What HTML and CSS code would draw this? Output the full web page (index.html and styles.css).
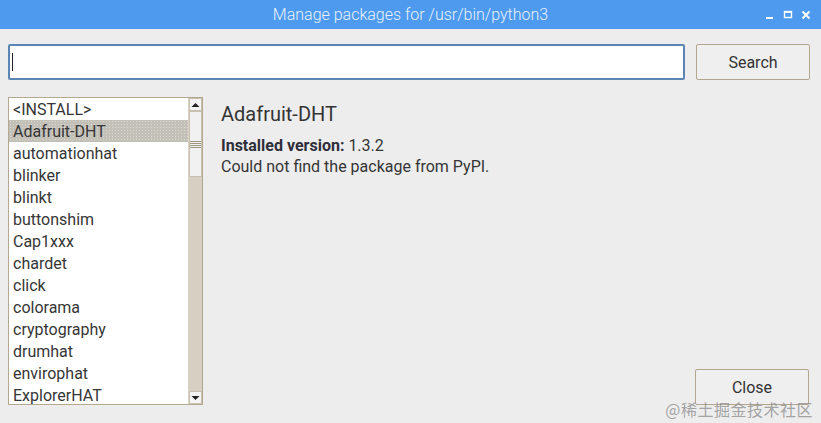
FILE: index.html
```html
<!DOCTYPE html>
<html>
<head>
<meta charset="utf-8">
<link rel="stylesheet" href="styles.css">
</head>
<body>
<div class="window">
  <div class="titlebar">
    <div class="title">Manage packages for /usr/bin/python3</div>
    <div class="wbtns">
      <svg width="10" height="10" viewBox="0 0 10 10"><rect x="1" y="7" width="7" height="2" fill="#fff"/></svg>
      <svg width="10" height="10" viewBox="0 0 10 10"><rect x="1.5" y="1.5" width="7" height="6" fill="none" stroke="#fff" stroke-width="1.4"/><rect x="1" y="1" width="8" height="2" fill="#fff"/></svg>
      <svg width="10" height="10" viewBox="0 0 10 10"><path d="M1.5 1.5 L8.5 8.5 M8.5 1.5 L1.5 8.5" stroke="#fff" stroke-width="2"/></svg>
    </div>
  </div>
  <div class="content">
    <div class="searchrow">
      <div class="searchbox"><span class="caret"></span></div>
      <div class="btn">Search</div>
    </div>
    <div class="mainrow">
      <div class="listbox">
        <div class="items">
          <div class="item">&lt;INSTALL&gt;</div>
          <div class="item sel">Adafruit-DHT</div>
          <div class="item">automationhat</div>
          <div class="item">blinker</div>
          <div class="item">blinkt</div>
          <div class="item">buttonshim</div>
          <div class="item">Cap1xxx</div>
          <div class="item">chardet</div>
          <div class="item">click</div>
          <div class="item">colorama</div>
          <div class="item">cryptography</div>
          <div class="item">drumhat</div>
          <div class="item">envirophat</div>
          <div class="item">ExplorerHAT</div>
        </div>
        <div class="scrollbar">
          <div class="arrow"><svg width="9" height="6" viewBox="0 0 9 6"><path d="M0.5 5 L4.5 1 L8.5 5 Z" fill="#222"/></svg></div>
          <div class="thumb"><div class="grip"></div></div>
          <div class="trough"></div>
          <div class="arrow"><svg width="9" height="6" viewBox="0 0 9 6"><path d="M0.5 1 L4.5 5 L8.5 1 Z" fill="#222"/></svg></div>
        </div>
      </div>
      <div class="details">
        <div class="pkgname">Adafruit-DHT</div>
        <div class="info"><b>Installed version:</b> 1.3.2</div>
        <div class="info">Could not find the package from PyPI.</div>
      </div>
      <div class="closecol">
        <div class="btn">Close</div>
      </div>
    </div>
  </div>
  <div class="watermark">@稀土掘金技术社区</div>
</div>
</body>
</html>
```

FILE: styles.css
```css
html, body {
  margin: 0;
  padding: 0;
  background: #ededed;
}
body {
  font-family: Roboto, "Noto Sans", sans-serif;
  color: #353535;
  width: 821px;
  height: 423px;
  overflow: hidden;
}
.window {
  position: relative;
  width: 821px;
  height: 423px;
}
.titlebar {
  height: 29px;
  background: #4d9aef;
  display: flex;
  align-items: center;
  justify-content: center;
  position: relative;
}
.title {
  color: #e8f1fc;
  font-size: 16px;
  font-weight: 300;
  margin-left: 0;
}
.wbtns {
  position: absolute;
  right: 10px;
  top: 10px;
  display: flex;
  gap: 8px;
}
.content {
  padding: 15px 11px 0 8px;
}
.searchrow {
  display: flex;
  gap: 11px;
  height: 36px;
}
.searchbox {
  flex: 1;
  background: #fff;
  border: 2px solid #5b86b4;
  border-radius: 2px;
  box-sizing: border-box;
  display: flex;
  align-items: center;
  padding-left: 2px;
}
.caret {
  width: 1px;
  height: 18px;
  background: #222;
}
.btn {
  width: 114px;
  height: 36px;
  box-sizing: border-box;
  border: 1px solid #b3a78f;
  border-radius: 2px;
  background: #efefef;
  display: flex;
  align-items: center;
  justify-content: center;
  font-size: 16px;
  color: #333;
  padding-top: 1px;
}
.mainrow {
  display: flex;
  margin-top: 17px;
  height: 308px;
}
.listbox {
  width: 195px;
  height: 308px;
  box-sizing: border-box;
  border: 1px solid #b3a78f;
  background: #fff;
  display: flex;
  overflow: hidden;
}
.items {
  flex: 1;
  overflow: hidden;
}
.item {
  height: 22px;
  line-height: 24px;
  font-size: 16px;
  padding-left: 4px;
  white-space: nowrap;
  color: #363636;
}
.item.sel {
  background-color: #c3c0b8;
  background-image: radial-gradient(circle, #d9d7d2 0.7px, transparent 0.9px);
  background-size: 3px 3px;
}
.scrollbar {
  width: 13px;
  display: flex;
  flex-direction: column;
  border-left: 1px solid #d8d2c4;
}
.arrow {
  height: 13px;
  background: #f4f4f4;
  border: 1px solid #c8c0b0;
  box-sizing: border-box;
  display: flex;
  align-items: center;
  justify-content: center;
}
.thumb {
  height: 66px;
  background: #f2f1f1;
  border: 1px solid #c8c0b0;
  box-sizing: border-box;
  display: flex;
  align-items: center;
  justify-content: center;
}
.grip {
  width: 11px;
  height: 7px;
  background: repeating-linear-gradient(to bottom, #a09680 0 1px, transparent 1px 2px);
}
.trough {
  flex: 1;
  background-color: #cdc4b3;
  background-image: radial-gradient(circle, #e2ddd3 0.6px, transparent 0.8px);
  background-size: 2px 2px;
}
.details {
  flex: 1;
  padding-left: 18px;
  padding-top: 3px;
}
.pkgname {
  font-size: 20px;
  color: #333;
  height: 28px;
  line-height: 28px;
  margin-bottom: 7px;
}
.info {
  font-size: 16px;
  line-height: 21px;
  color: #353535;
}
.info b {
  font-weight: 700;
  color: #2e2e3a;
}
.closecol {
  display: flex;
  align-items: flex-end;
  margin-right: 1px;
}
.watermark {
  position: absolute;
  right: 8px;
  bottom: 2px;
  font-family: "Noto Sans CJK SC", sans-serif;
  font-size: 16px;
  color: rgba(130,130,130,0.7);
  letter-spacing: 0.5px;
}
```
